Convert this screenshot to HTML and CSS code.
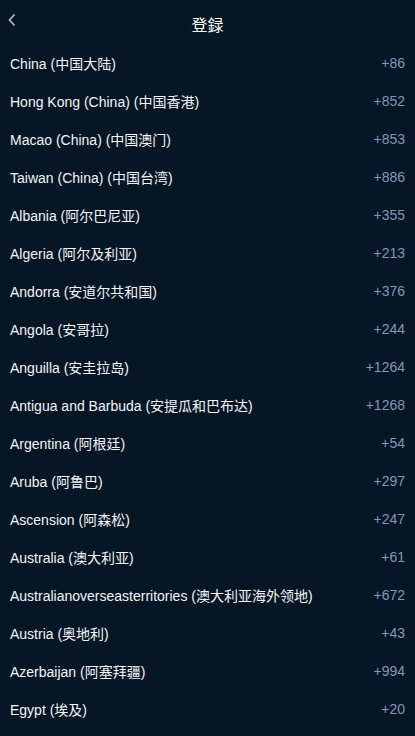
FILE: index.html
```html
<!DOCTYPE html>
<html lang="zh">
<head>
<meta charset="utf-8">
<title>登録</title>
<link rel="stylesheet" href="styles.css">
</head>
<body>
<div class="page">
  <header class="header">
    <span class="back">
      <svg width="10" height="14" viewBox="0 0 10 14"><path d="M7.5 1.5 L2.5 7 L7.5 12.5" fill="none" stroke="#b3bbc4" stroke-width="1.7"/></svg>
    </span>
    <h1 class="title">登録</h1>
  </header>
  <ul class="list">
    <li class="row"><span class="name">China (中国大陆)</span><span class="code">+86</span></li>
    <li class="row"><span class="name">Hong Kong (China) (中国香港)</span><span class="code">+852</span></li>
    <li class="row"><span class="name">Macao (China) (中国澳门)</span><span class="code">+853</span></li>
    <li class="row"><span class="name">Taiwan (China) (中国台湾)</span><span class="code">+886</span></li>
    <li class="row"><span class="name">Albania (阿尔巴尼亚)</span><span class="code">+355</span></li>
    <li class="row"><span class="name">Algeria (阿尔及利亚)</span><span class="code">+213</span></li>
    <li class="row"><span class="name">Andorra (安道尔共和国)</span><span class="code">+376</span></li>
    <li class="row"><span class="name">Angola (安哥拉)</span><span class="code">+244</span></li>
    <li class="row"><span class="name">Anguilla (安圭拉岛)</span><span class="code">+1264</span></li>
    <li class="row"><span class="name">Antigua and Barbuda (安提瓜和巴布达)</span><span class="code">+1268</span></li>
    <li class="row"><span class="name">Argentina (阿根廷)</span><span class="code">+54</span></li>
    <li class="row"><span class="name">Aruba (阿鲁巴)</span><span class="code">+297</span></li>
    <li class="row"><span class="name">Ascension (阿森松)</span><span class="code">+247</span></li>
    <li class="row"><span class="name">Australia (澳大利亚)</span><span class="code">+61</span></li>
    <li class="row"><span class="name">Australianoverseasterritories (澳大利亚海外领地)</span><span class="code">+672</span></li>
    <li class="row"><span class="name">Austria (奥地利)</span><span class="code">+43</span></li>
    <li class="row"><span class="name">Azerbaijan (阿塞拜疆)</span><span class="code">+994</span></li>
    <li class="row"><span class="name">Egypt (埃及)</span><span class="code">+20</span></li>
  </ul>
</div>
</body>
</html>
```
FILE: styles.css
```css
html, body {
  margin: 0;
  padding: 0;
  background: #071624;
}
body {
  font-family: "Liberation Sans", Arial, "Noto Sans CJK SC", sans-serif;
  color: #f2f4f7;
  width: 415px;
  height: 736px;
  overflow: hidden;
}
.header {
  position: relative;
  height: 44px;
  display: flex;
  align-items: center;
  justify-content: center;
}
.back {
  position: absolute;
  left: 7px;
  top: 13px;
  width: 10px;
  height: 14px;
  display: flex;
}
.title {
  margin: 0;
  font-size: 16px;
  font-weight: normal;
  color: #ffffff;
  position: relative;
  top: 2px;
}
.list {
  list-style: none;
  margin: 0;
  padding: 0;
}
.row {
  height: 38px;
  display: flex;
  align-items: center;
  justify-content: space-between;
  padding: 0 10px;
  font-size: 14px;
}
.name {
  color: #f2f4f7;
}
.code {
  color: #8197bd;
}
```
